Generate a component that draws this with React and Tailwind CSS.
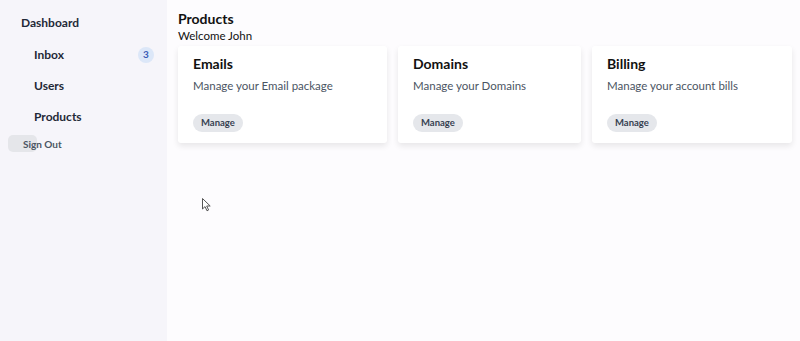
const NAV = [
  { label: 'Inbox', badge: 3 },
  { label: 'Users' },
  { label: 'Products' },
]

const CARDS = [
  { title: 'Emails', desc: 'Manage your Email package', w: 'w-[209px]' },
  { title: 'Domains', desc: 'Manage your Domains', w: 'w-[183px]' },
  { title: 'Billing', desc: 'Manage your account bills', w: 'w-[200px]' },
]

function Cursor() {
  return (
    <svg className="absolute left-[202px] top-[198px]" width="10" height="14" viewBox="0 0 10 14">
      <path d="M0.5 0.5 L0.5 11 L3 8.6 L5 12.8 L6.6 12 L4.7 8 L8.2 8 Z" fill="#fff" stroke="#555" strokeWidth="1" strokeLinejoin="round" />
    </svg>
  )
}

export default function App() {
  return (
    <div className="relative flex h-[341px] w-[800px] bg-[#fdfcfe] text-[#111827] font-['Lato',sans-serif]">
      {/* Sidebar */}
      <aside className="w-[167px] shrink-0 bg-[#f6f5fa] pt-[14px]">
        <div className="pl-[21px] text-[12px] font-bold leading-[17px] text-[#1f2937]">Dashboard</div>
        <nav className="mt-[15px] flex flex-col gap-[14px]">
          {NAV.map(n => (
            <div key={n.label} className="flex h-[17px] items-center justify-between pl-[34px] pr-[13px]">
              <span className="text-[12px] font-bold text-[#1f2937]">{n.label}</span>
              {n.badge && (
                <span className="flex h-[16px] w-[16px] items-center justify-center rounded-full bg-[#dce7f8] text-[10px] font-bold text-[#3b5bb5]">
                  {n.badge}
                </span>
              )}
            </div>
          ))}
        </nav>
        <div className="relative mt-[10px] ml-[8px] h-[18px]">
          <div className="absolute left-0 top-0 h-[17px] w-[29px] rounded-[5px] bg-[#e5e6ea]" />
          <span className="absolute left-[15px] top-[2px] text-[10px] font-bold text-[#4b5563]">Sign Out</span>
        </div>
      </aside>

      {/* Main */}
      <main className="flex-1 px-[11px] pt-[10px]">
        <h1 className="text-[14px] font-bold leading-[18px] text-[#111]">Products</h1>
        <p className="text-[11.5px] leading-[16px] text-[#111]">Welcome John</p>
        <div className="mt-[2px] flex gap-[11px]">
          {CARDS.map(c => (
            <div key={c.title} className={`${c.w} h-[97px] rounded-[3px] bg-white px-[15px] pt-[9px] shadow-[0_3px_6px_rgba(0,0,0,0.09)]`}>
              <h2 className="text-[14px] font-bold leading-[18px] text-[#111]">{c.title}</h2>
              <p className="mt-[5px] text-[11.5px] leading-[16px] text-[#4b5563]">{c.desc}</p>
              <button className="mt-[20px] h-[18px] rounded-full bg-[#e5e7eb] px-[8px] text-[9.5px] font-bold text-[#374151]">
                Manage
              </button>
            </div>
          ))}
        </div>
      </main>

      <Cursor />
    </div>
  )
}
